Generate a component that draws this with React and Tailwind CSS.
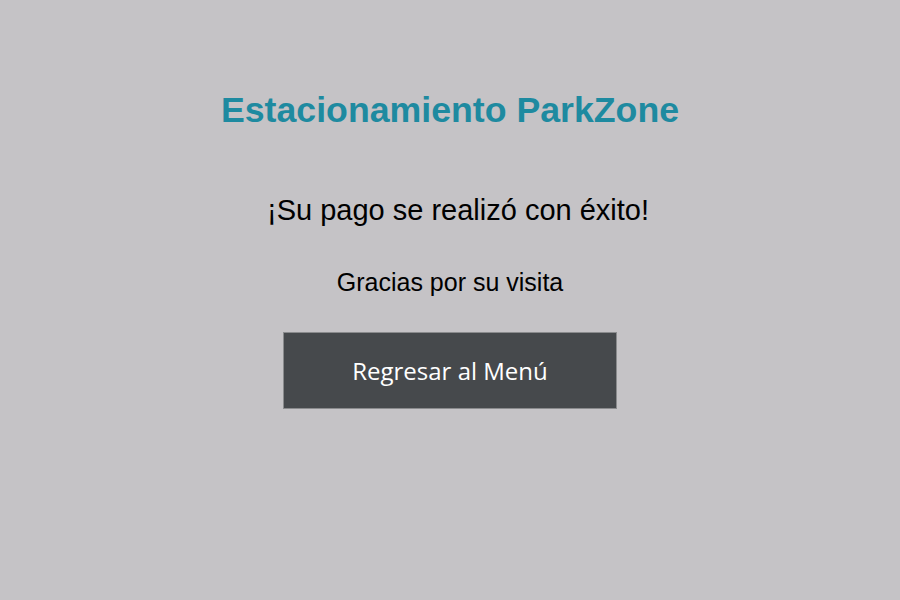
export default function App() {
  return (
    <div className="w-[900px] h-[600px] bg-[#c5c3c6] flex flex-col items-center" style={{ fontFamily: '"Liberation Sans", Arial, sans-serif' }}>
      <h1 className="mt-[88px] text-[35.7px] leading-[44px] font-bold text-[#1e8aa0]">Estacionamiento ParkZone</h1>
      <p className="mt-[60px] pl-[16px] text-[29px] leading-[36px] text-black">¡Su pago se realizó con éxito!</p>
      <p className="mt-[39px] text-[25px] leading-[30px] text-black">Gracias por su visita</p>
      <button
        className="mt-[35px] w-[334px] h-[77px] bg-[#46494c] border border-[#8a8b8d] text-white text-[24px]"
        style={{ fontFamily: '"Open Sans", sans-serif' }}
      >
        Regresar al Menú
      </button>
    </div>
  );
}
